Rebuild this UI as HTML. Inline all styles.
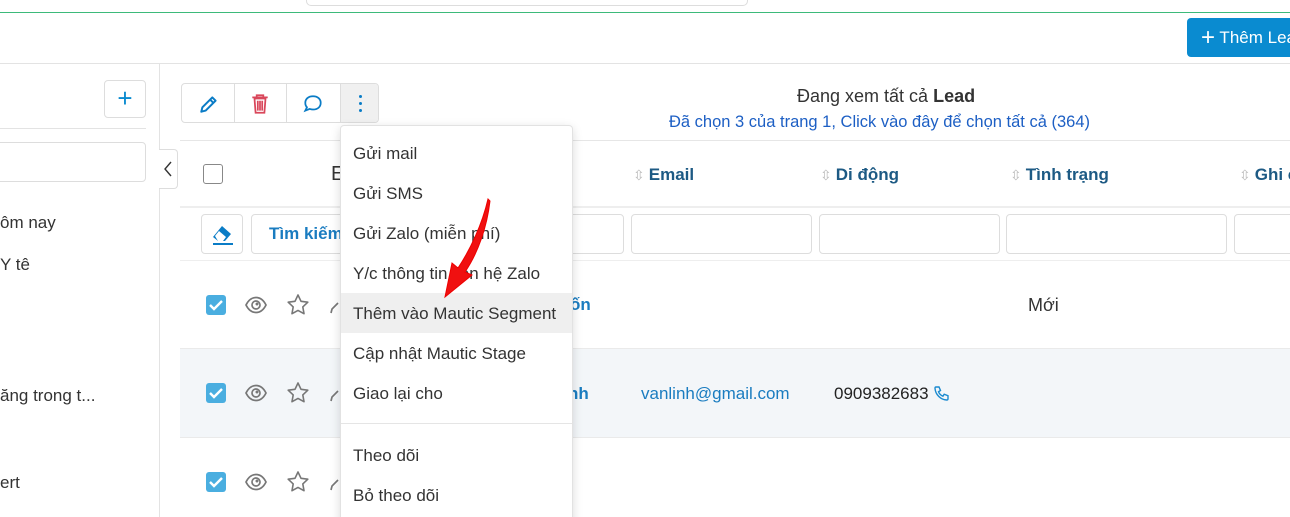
<!DOCTYPE html>
<html><head><meta charset="utf-8"><style>
*{margin:0;padding:0;box-sizing:border-box}
html,body{width:1290px;height:517px;overflow:hidden}
body{background:#fff;font-family:"Liberation Sans",sans-serif;color:#333;position:relative}
.a{position:absolute}
.t{position:absolute;white-space:nowrap;font-size:17px;line-height:20px}
.hd{position:absolute;white-space:nowrap;font-size:17px;font-weight:bold;color:#1d5a84;line-height:20px}
.inp{position:absolute;border:1px solid #ddd;border-radius:4px;background:#fff}
.cb{position:absolute;width:20px;height:20px;border-radius:3px;background:#4aaee0}
.mi{position:absolute;left:12px;font-size:17px;color:#333;line-height:20px;white-space:nowrap}
.srt{color:#bbb;font-size:14px;font-weight:normal;margin-right:4px}
</style></head><body>
<div class="a" style="left:306px;top:-10px;width:442px;height:16px;border:1px solid #ddd;border-radius:5px"></div>
<div class="a" style="left:0;top:12px;width:1290px;height:1px;background:#3dba7a"></div>
<div class="a" style="left:1187px;top:18px;width:110px;height:39px;background:#0a8bd0;border-radius:4px;color:#fff;font-size:17px;line-height:39px;padding-left:14px;white-space:nowrap"><span style="font-size:24px;vertical-align:-2px">+</span> Thêm Lead</div>
<div class="a" style="left:0;top:63px;width:1290px;height:1px;background:#e3e3e3"></div>
<div class="a" style="left:159px;top:64px;width:1px;height:453px;background:#e3e3e3"></div>
<div class="a" style="left:104px;top:80px;width:42px;height:38px;border:1px solid #ddd;border-radius:4px;color:#0a8bd0;font-size:26px;text-align:center;line-height:34px">+</div>
<div class="a" style="left:0;top:128px;width:146px;height:1px;background:#e3e3e3"></div>
<div class="inp" style="left:-5px;top:142px;width:151px;height:40px"></div>
<div class="t" style="left:0;top:213px">ôm nay</div>
<div class="t" style="left:0;top:255px">Y tê</div>
<div class="t" style="left:0;top:386px">ăng trong t...</div>
<div class="t" style="left:0;top:473px">ert</div>
<div class="a" style="left:159px;top:149px;width:19px;height:40px;border:1px solid #ddd;border-left:none;border-radius:0 4px 4px 0;background:#fff"></div>
<svg class="a" style="left:162px;top:160px" width="12" height="18"><path d="M9 2L3 9l6 7" fill="none" stroke="#333" stroke-width="1.4"/></svg>
<div class="a" style="left:181px;top:83px;width:198px;height:40px;border:1px solid #ddd;border-radius:4px;overflow:hidden">
 <div class="a" style="left:52px;top:0;width:1px;height:40px;background:#ddd"></div>
 <div class="a" style="left:104px;top:0;width:1px;height:40px;background:#ddd"></div>
 <div class="a" style="left:158px;top:0;width:40px;height:40px;background:#f0f0f0;border-left:1px solid #ddd"></div>
 <svg class="a" style="left:16px;top:9px" width="22" height="22" viewBox="0 0 20 20"><path d="M3 17l1-4L13 4l3 3-9 9z M11 6l3 3" fill="none" stroke="#0a7cc6" stroke-width="1.8" stroke-linejoin="round"/></svg>
 <svg class="a" style="left:68px;top:9px" width="20" height="22" viewBox="0 0 18 20"><path d="M2 4h14M6 4V2h6v2M4 5l1 13h8l1-13z M7 7v9M9 7v9M11 7v9" fill="none" stroke="#d9475b" stroke-width="1.6"/></svg>
 <svg class="a" style="left:120px;top:9px" width="22" height="22" viewBox="0 0 20 20"><path d="M10 3c4.5 0 7 2.6 7 6s-2.5 6-7 6c-1 0-2-.2-3-.5L3 16l1.5-3C3.5 12 3 10.5 3 9c0-3.4 2.5-6 7-6z" fill="none" stroke="#0a7cc6" stroke-width="1.6"/></svg>
 <div class="a" style="left:177px;top:11px;width:3px;height:3px;border-radius:2px;background:#0a7cc6;box-shadow:0 7px 0 #0a7cc6,0 14px 0 #0a7cc6"></div>
</div>
<div class="t" style="left:797px;top:86px;font-size:18px;color:#333">Đang xem tất cả <b>Lead</b></div>
<div class="t" style="left:669px;top:112px;font-size:16.5px;color:#1d5fc4">Đã chọn 3 của trang 1, Click vào đây để chọn tất cả (364)</div>
<div class="a" style="left:180px;top:140px;width:1110px;height:1px;background:#e6e6e6"></div>
<div class="a" style="left:203px;top:164px;width:20px;height:20px;border:1px solid #888;border-radius:3px"></div>
<div class="t" style="left:331px;top:164px;font-size:20px">E</div>
<div class="hd" style="left:633px;top:165px"><span class="srt">⇳</span>Email</div>
<div class="hd" style="left:820px;top:165px"><span class="srt">⇳</span>Di động</div>
<div class="hd" style="left:1010px;top:165px"><span class="srt">⇳</span>Tình trạng</div>
<div class="hd" style="left:1239px;top:165px"><span class="srt">⇳</span>Ghi chú</div>
<div class="a" style="left:180px;top:206px;width:1110px;height:2px;background:#eee"></div>
<div class="inp" style="left:201px;top:214px;width:42px;height:40px"></div>
<svg class="a" style="left:210px;top:222px" width="26" height="24" viewBox="0 0 26 24"><path d="M3 15L12 4l9 8-6 7H8z" fill="#0a7cc6"/><path d="M5 14l4-5 7 6-3 4H8z" fill="#fff"/><path d="M3 22h20" stroke="#0a7cc6" stroke-width="2"/></svg>
<div class="inp" style="left:251px;top:214px;width:100px;height:40px;color:#1a7cc0;font-weight:bold;font-size:17px;line-height:38px;padding-left:17px;white-space:nowrap">Tìm kiếm</div>
<div class="inp" style="left:530px;top:214px;width:94px;height:40px"></div>
<div class="inp" style="left:631px;top:214px;width:181px;height:40px"></div>
<div class="inp" style="left:819px;top:214px;width:181px;height:40px"></div>
<div class="inp" style="left:1006px;top:214px;width:221px;height:40px"></div>
<div class="inp" style="left:1234px;top:214px;width:70px;height:40px"></div>
<div class="a" style="left:180px;top:260px;width:1110px;height:1px;background:#eee"></div>
<div class="a" style="left:180px;top:348px;width:1110px;height:90px;background:#f3f6f9;border-top:1px solid #eaeaea;border-bottom:1px solid #eaeaea"></div>
<svg width="0" height="0" style="position:absolute"><defs>
<g id="ck"><rect width="20" height="20" rx="3" fill="#4aaee0"/><path d="M4 10l4 4 8-8" fill="none" stroke="#fff" stroke-width="2.4"/></g>
<g id="rowic"><path d="M1 11c3-6 6.5-7.5 10-7.5s7 1.5 10 7.5c-3 6-6.5 7.5-10 7.5S4 17 1 11z" fill="none" stroke="#777" stroke-width="1.7"/><circle cx="11" cy="11" r="4" fill="none" stroke="#777" stroke-width="1.7"/><circle cx="12" cy="10" r="1.5" fill="#777"/>
<path d="M53 1l3 6.3 6.8.9-5 4.7 1.2 6.8-6-3.3-6 3.3 1.2-6.8-5-4.7 6.8-.9z" fill="none" stroke="#777" stroke-width="1.6" stroke-linejoin="round"/>
<path d="M86 19l1-4 6-6" fill="none" stroke="#777" stroke-width="1.7"/></g></defs></svg>
<svg class="a" style="left:206px;top:295px" width="20" height="20"><use href="#ck"/></svg>
<svg class="a" style="left:206px;top:383px" width="20" height="20"><use href="#ck"/></svg>
<svg class="a" style="left:206px;top:472px" width="20" height="20"><use href="#ck"/></svg>
<svg class="a" style="left:245px;top:294px" width="100" height="22"><use href="#rowic"/></svg>
<svg class="a" style="left:245px;top:382px" width="100" height="22"><use href="#rowic"/></svg>
<svg class="a" style="left:245px;top:471px" width="100" height="22"><use href="#rowic"/></svg>
<div class="t" style="left:570px;top:295px;color:#1a7cc0;font-weight:bold">ốn</div>
<div class="t" style="left:1028px;top:295px;font-size:18px">Mới</div>
<div class="t" style="left:568px;top:384px;color:#1a7cc0;font-weight:bold">nh</div>
<div class="t" style="left:641px;top:384px;color:#1a7cc0">vanlinh@gmail.com</div>
<div class="t" style="left:834px;top:384px;color:#222">0909382683</div>
<svg class="a" style="left:933px;top:385px" width="17" height="17" viewBox="0 0 17 17"><path d="M3 2l3 0 1.5 3.5-2 1.3c.8 2 2.4 3.6 4.4 4.4l1.3-2L15 10.7v3c0 .8-.6 1.3-1.3 1.3C7.5 14.6 2.4 9.5 2 3.3 2 2.6 2.4 2 3 2z" fill="none" stroke="#1a8ad0" stroke-width="1.4"/></svg>
<div class="a" style="left:340px;top:125px;width:233px;height:400px;background:#fff;border:1px solid #e2e2e2;border-radius:4px;box-shadow:0 3px 10px rgba(0,0,0,.15)">
 <div class="a" style="left:0;top:167px;width:231px;height:40px;background:#efefef"></div>
 <div class="mi" style="top:18px">Gửi mail</div>
 <div class="mi" style="top:58px">Gửi SMS</div>
 <div class="mi" style="top:98px">Gửi Zalo (miễn phí)</div>
 <div class="mi" style="top:138px">Y/c thông tin liên hệ Zalo</div>
 <div class="mi" style="top:178px">Thêm vào Mautic Segment</div>
 <div class="mi" style="top:218px">Cập nhật Mautic Stage</div>
 <div class="mi" style="top:258px">Giao lại cho</div>
 <div class="a" style="left:0;top:297px;width:231px;height:1px;background:#e5e5e5"></div>
 <div class="mi" style="top:320px">Theo dõi</div>
 <div class="mi" style="top:360px">Bỏ theo dõi</div>
</div>
<svg class="a" style="left:430px;top:195px" width="70" height="110" viewBox="0 0 70 110"><path d="M59 5L58 4 C52 30 40 55 28 73 L22 68 L15 102 L42 80 L35 77 C48 58 57 32 60 6z" fill="#f01010" stroke="#e00" stroke-width="1"/></svg>
</body></html>
